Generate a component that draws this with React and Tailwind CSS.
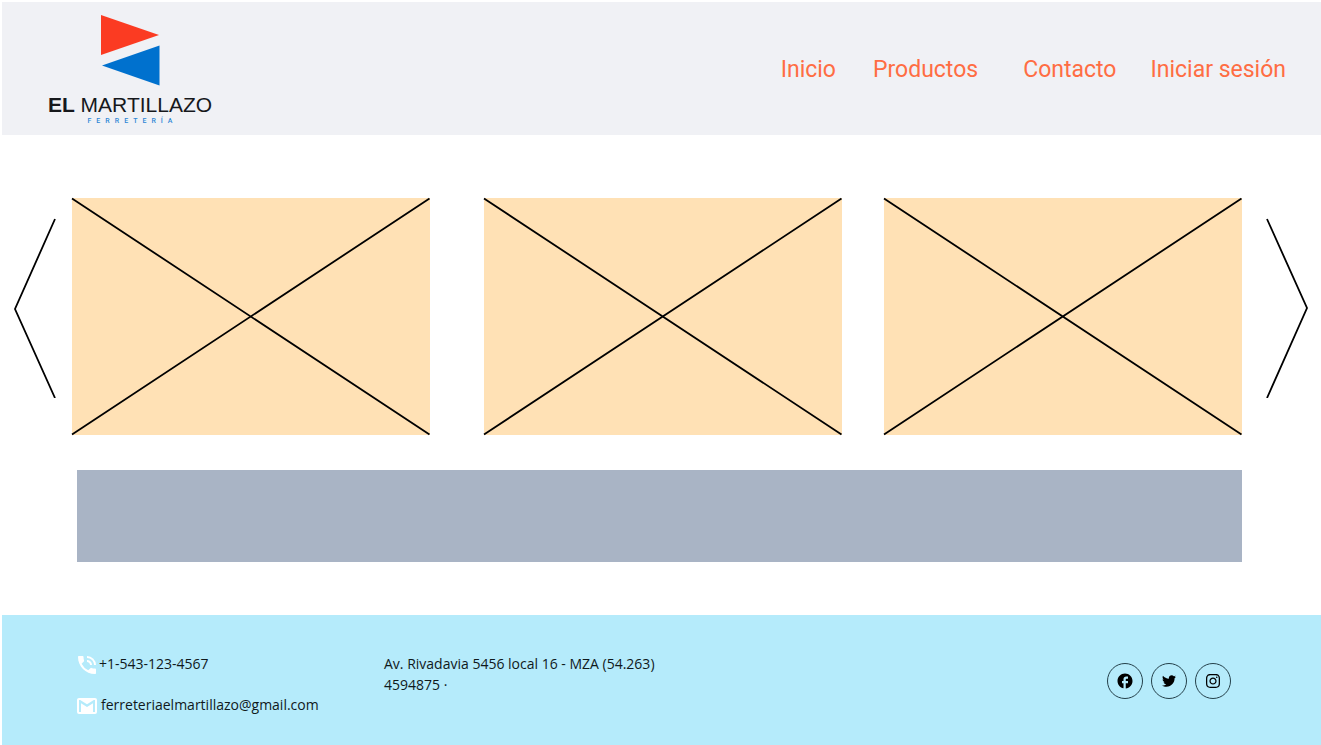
import React from "react";
import { MdFacebook, MdPhoneInTalk } from "react-icons/md";
import { FaInstagram, FaTwitter } from "react-icons/fa";

function Logo() {
  return (
    <a href="#inicio" className="flex w-[162px] flex-col items-center">
      <svg viewBox="0 0 60 72" className="h-[72px] w-[60px]" aria-hidden="true">
        <path d="M1 1 L59 21 L1 41 Z" fill="#fb3b22" />
        <path d="M59.5 31.5 V71.5 L2 51.5 Z" fill="#0071ce" />
      </svg>
      <span className="mt-[8px] whitespace-nowrap font-['Liberation_Sans',sans-serif] text-[21px] leading-[22px] text-[#16181c]">
        <b>EL</b> MARTILLAZO
      </span>
      <span className="pl-[5px] font-[Roboto,sans-serif] text-[7px] font-medium leading-[10px] tracking-[5px] text-[#2f87d6]">
        FERRETERÍA
      </span>
    </a>
  );
}

function Header() {
  return (
    <header className="flex h-[133px] items-start justify-between bg-[#f0f1f5] pl-[47px] pr-[35px] pt-[12px]">
      <Logo />
      <nav className="mt-[38px] flex font-[Roboto,sans-serif] text-[23px] leading-[36px] text-[#ff6d43]">
        <a href="#inicio" className="mr-[37px]">Inicio</a>
        <a href="#productos" className="mr-[45px]">Productos</a>
        <a href="#contacto" className="mr-[34px]">Contacto</a>
        <a href="#sesion">Iniciar sesión</a>
      </nav>
    </header>
  );
}

function Arrow({ label, points }) {
  return (
    <button type="button" aria-label={label} className="mt-[20px] shrink-0">
      <svg viewBox="0 0 42 180" className="h-[180px] w-[42px]" fill="none" stroke="#000" strokeWidth="1.8">
        <polyline points={points} />
      </svg>
    </button>
  );
}

function Placeholder() {
  return (
    <div className="h-[237px] flex-1 bg-[#ffe1b5]">
      <svg
        viewBox="0 0 358 237"
        preserveAspectRatio="none"
        className="size-full overflow-visible"
        stroke="#000"
        strokeWidth="1.8"
        aria-hidden="true"
      >
        <path d="M0 0.5 L357.5 236.5 M0 236.5 L357.5 0.5" />
      </svg>
    </div>
  );
}

function Social({ label, children }) {
  return (
    <a
      href="#social"
      aria-label={label}
      className="flex size-[36px] items-center justify-center rounded-full border border-[#24404a] text-black"
    >
      {children}
    </a>
  );
}

function Footer() {
  return (
    <footer className="flex h-[130px] items-start bg-[#b5ebfb] pl-[73px] pr-[90px] font-['Open_Sans',sans-serif] text-[14px] leading-[21px] text-[#10191c]">
      <div className="mt-[38px] flex w-[309px] flex-col gap-[17px]">
        <p className="flex h-[24px] items-start">
          <MdPhoneInTalk className="size-[24px] text-white" />
          <span>+1-543-123-4567</span>
        </p>
        <p className="flex h-[24px] items-start">
          <svg viewBox="0 0 24 24" className="mr-[2px] size-[24px] text-white" fill="currentColor" aria-hidden="true">
            <path d="M20 18h-2V9.25L12 13 6 9.25V18H4V6h1.2l6.8 4.25L18.8 6H20m0-2H4c-1.11 0-2 .89-2 2v12a2 2 0 0 0 2 2h16a2 2 0 0 0 2-2V6a2 2 0 0 0-2-2z" />
          </svg>
          <a href="mailto:ferreteriaelmartillazo@gmail.com">ferreteriaelmartillazo@gmail.com</a>
        </p>
      </div>
      <address className="mt-[38px] w-[280px] not-italic">
        Av. Rivadavia 5456 local 16 - MZA (54.263) 4594875 ·
      </address>
      <div className="ml-auto mt-[48px] flex gap-[8px]">
        <Social label="Facebook">
          <MdFacebook className="size-[18px]" />
        </Social>
        <Social label="Twitter">
          <FaTwitter className="size-[14px]" />
        </Social>
        <Social label="Instagram">
          <FaInstagram className="size-[16px]" />
        </Social>
      </div>
    </footer>
  );
}

export default function App() {
  return (
    <div className="min-h-screen bg-white pl-[2px] pt-[2px]">
      <Header />
      <main className="pb-[53px] pt-[63px]">
        <section className="flex items-start pl-[12px] pr-[13px]" aria-label="Destacados">
          <Arrow label="Anterior" points="41,1 1,91 41,180" />
          <div className="ml-[16px] mr-[24px] flex flex-1">
            <Placeholder />
            <div className="w-[54px]" />
            <Placeholder />
            <div className="w-[42px]" />
            <Placeholder />
          </div>
          <Arrow label="Siguiente" points="1,1 41,90 1,180" />
        </section>
        <div className="ml-[75px] mr-[79px] mt-[35px] h-[92px] bg-[#a9b4c5]" />
      </main>
      <Footer />
    </div>
  );
}
